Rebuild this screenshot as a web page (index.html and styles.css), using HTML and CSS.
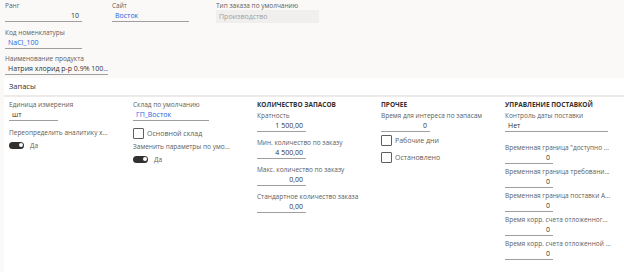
FILE: index.html
```html
<!DOCTYPE html>
<html lang="ru">
<head>
    <meta charset="UTF-8">
    <title>Номенклатура</title>
    <link rel="stylesheet" href="styles.css">
</head>
<body>
    <div class="top">
        <div class="row">
            <div class="field w77">
                <div class="lbl">Ранг</div>
                <div class="inp num">10</div>
            </div>
            <div class="field w77 gap30">
                <div class="lbl">Сайт</div>
                <div class="inp link">Восток</div>
            </div>
            <div class="field w103 gap27">
                <div class="lbl">Тип заказа по умолчанию</div>
                <div class="inp disabled">Производство</div>
            </div>
        </div>
        <div class="field w77">
            <div class="lbl">Код номенклатуры</div>
            <div class="inp link">NaCl_100</div>
        </div>
        <div class="field w103">
            <div class="lbl">Наименование продукта</div>
            <div class="inp">Натрия хлорид р-р 0.9% 100...</div>
        </div>
    </div>

    <div class="panel">
        <div class="panel-head">Запасы</div>
        <div class="panel-body">
            <div class="col">
                <div class="field w49 loose">
                    <div class="lbl">Единица измерения</div>
                    <div class="inp">шт</div>
                </div>
                <div class="lbl">Переопределить аналитику х...</div>
                <div class="toggle-row"><span class="toggle"></span>Да</div>
            </div>

            <div class="col">
                <div class="field w76 tight">
                    <div class="lbl">Склад по умолчанию</div>
                    <div class="inp link">ГП_Восток</div>
                </div>
                <div class="check-row spaced"><span class="box"></span>Основной склад</div>
                <div class="lbl">Заменить параметры по умо...</div>
                <div class="toggle-row"><span class="toggle"></span>Да</div>
            </div>

            <div class="col qty">
                <div class="col-title">КОЛИЧЕСТВО ЗАПАСОВ</div>
                <div class="field w49">
                    <div class="lbl">Кратность</div>
                    <div class="inp num">1 500,00</div>
                </div>
                <div class="field w49">
                    <div class="lbl">Мин. количество по заказу</div>
                    <div class="inp num">4 500,00</div>
                </div>
                <div class="field w49">
                    <div class="lbl">Макс. количество по заказу</div>
                    <div class="inp num">0,00</div>
                </div>
                <div class="field w49">
                    <div class="lbl">Стандартное количество заказа</div>
                    <div class="inp num">0,00</div>
                </div>
            </div>

            <div class="col">
                <div class="col-title">ПРОЧЕЕ</div>
                <div class="field w49 tight">
                    <div class="lbl">Время для интереса по запасам</div>
                    <div class="inp num">0</div>
                </div>
                <div class="check-row"><span class="box"></span>Рабочие дни</div>
                <div class="check-row"><span class="box"></span>Остановлено</div>
            </div>

            <div class="col">
                <div class="col-title">УПРАВЛЕНИЕ ПОСТАВКОЙ</div>
                <div class="field w103 first">
                    <div class="lbl">Контроль даты поставки</div>
                    <div class="inp">Нет</div>
                </div>
                <div class="field w48 small">
                    <div class="lbl">Временная граница "доступно ...</div>
                    <div class="inp num">0</div>
                </div>
                <div class="field w48 small">
                    <div class="lbl">Временная граница требовани...</div>
                    <div class="inp num">0</div>
                </div>
                <div class="field w48 small">
                    <div class="lbl">Временная граница поставки А...</div>
                    <div class="inp num">0</div>
                </div>
                <div class="field w48 small">
                    <div class="lbl">Время корр. счета отложенног...</div>
                    <div class="inp num">0</div>
                </div>
                <div class="field w48 small">
                    <div class="lbl">Время корр. счета отложенной ...</div>
                    <div class="inp num">0</div>
                </div>
            </div>
        </div>
    </div>
</body>
</html>
```

FILE: styles.css
```css
body {
    font-family: "Open Sans", "Noto Sans", sans-serif;
    font-size: 7px;
    margin: 0;
    padding: 0;
    background-color: #faf9f8;
    color: #323130;
    height: 272px;
    overflow: hidden;
}
.top {
    padding: 1px 0 0 5px;
    height: 77px;
}
.row {
    display: flex;
}
.gap30 {
    margin-left: 30px;
}
.gap27 {
    margin-left: 27px;
}
.field {
    margin-bottom: 5px;
}
.qty .field {
    margin-bottom: 6px;
}
.field.tight {
    margin-bottom: 0;
}
.field.loose {
    margin-bottom: 7px;
}
.field.first {
    margin-bottom: 11px;
}
.field.small {
    margin-bottom: 3px;
}
.w49 { width: 49px; }
.w48 { width: 48px; }
.w76 { width: 76px; }
.w77 { width: 77px; }
.w103 { width: 103px; }
.lbl {
    height: 10px;
    line-height: 10px;
    color: #605e5c;
    font-size: 6.5px;
    white-space: nowrap;
}
.inp {
    height: 10px;
    line-height: 10px;
    padding: 0 3px;
    border-bottom: 1px solid #a19f9d;
    font-size: 7px;
    white-space: nowrap;
    overflow: hidden;
}
.inp.num {
    text-align: right;
}
.inp.link {
    color: #2266e3;
}
.inp.disabled {
    background-color: #f0efee;
    border-bottom: none;
    color: #a19f9d;
    height: 13px;
    line-height: 13px;
    margin-top: -1px;
}
.panel {
    margin-left: 4px;
    background-color: #fff;
    height: 194px;
}
.panel-head {
    height: 17px;
    line-height: 17px;
    padding-left: 5px;
    font-size: 7.5px;
    border-bottom: 2px solid #edebe9;
}
.panel-body {
    display: grid;
    grid-template-columns: repeat(5, 124px);
    padding: 3px 0 0 5px;
}
.col-title {
    height: 11px;
    line-height: 10px;
    font-weight: bold;
    font-size: 6.5px;
}
.toggle-row {
    display: flex;
    align-items: center;
    height: 14px;
    color: #605e5c;
    font-size: 6.5px;
}
.toggle {
    display: inline-block;
    position: relative;
    width: 15px;
    height: 7px;
    border-radius: 4px;
    background-color: #323130;
    margin-right: 6px;
}
.toggle::after {
    content: "";
    position: absolute;
    right: 1.5px;
    top: 1.5px;
    width: 4px;
    height: 4px;
    border-radius: 50%;
    background-color: #fff;
}
.check-row {
    display: flex;
    align-items: center;
    height: 17px;
    color: #605e5c;
    font-size: 7px;
}
.check-row.spaced {
    height: 18px;
    padding-top: 3px;
}
.box {
    display: inline-block;
    width: 9px;
    height: 9px;
    border: 1px solid #605e5c;
    border-radius: 1px;
    margin-right: 3px;
}
```
